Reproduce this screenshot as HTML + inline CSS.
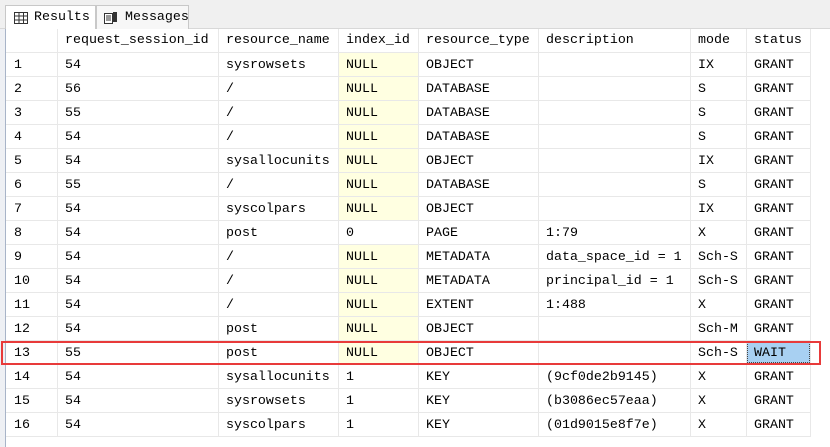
<!DOCTYPE html>
<html><head><style>
*{margin:0;padding:0;box-sizing:border-box}
body{width:830px;height:447px;background:#fff;position:relative;overflow:hidden;font-family:"Liberation Mono","Noto Sans CJK SC",monospace;font-size:13.3px;color:#000}
.tabbar{position:absolute;left:0;top:0;width:830px;height:29px;background:#f0f0f0;border-bottom:1px solid #d8d8d8}
.tab{position:absolute;top:5px;height:24px;border:1px solid #c8c8c8;border-bottom:none;line-height:22px;padding-left:28px;font-size:13.3px}
.leftstrip{position:absolute;left:0;top:29px;width:6px;height:418px;background:#eef0f4;border-right:1px solid #a8b4c8}
.c{position:absolute;height:24px;line-height:24px;white-space:nowrap;padding-left:7px}
.hl{position:absolute;background:#e8e8e8;height:1px}
.vl{position:absolute;background:#e8e8e8;width:1px;top:29px;height:408px}
.y{background:#ffffe1}
</style></head><body>
<div class="tabbar">
 <div class="tab" style="left:5px;width:91px;background:#fff">
  <svg style="position:absolute;left:8px;top:6px" width="14" height="12" viewBox="0 0 14 12"><rect x=".5" y=".5" width="13" height="11" fill="#fff" stroke="#333"/><path d="M.5 4h13M.5 8h13M5 .5v11M9.5 .5v11" stroke="#333"/></svg>Results</div>
 <div class="tab" style="left:96px;width:93px;background:#f7f7f7">
  <svg style="position:absolute;left:6px;top:5px" width="16" height="14" viewBox="0 0 16 14"><rect x="1.5" y="2.5" width="8" height="10" fill="#fff" stroke="#333"/><path d="M3 5h5M3 7h5M3 9h5" stroke="#333"/><rect x="10" y="1" width="4" height="10" fill="#333"/></svg>Messages</div>
</div>
<div class="leftstrip"></div>
<div style="position:absolute;left:747px;top:342px;width:63px;height:21px;background:#a8d0f2;border:1px dotted #444"></div>
<div id="g"></div>
<div style="position:absolute;left:1px;top:341px;width:820px;height:24px;border:2px solid #e83a3a"></div>
<script>
var xs=[6,57,218,338,418,538,690,746,810];
var h=["","request_session_id","resource_name","index_id","resource_type","description","mode","status"];
var d=[
["54","sysrowsets","NULL","OBJECT","","IX","GRANT"],
["56","/","NULL","DATABASE","","S","GRANT"],
["55","/","NULL","DATABASE","","S","GRANT"],
["54","/","NULL","DATABASE","","S","GRANT"],
["54","sysallocunits","NULL","OBJECT","","IX","GRANT"],
["55","/","NULL","DATABASE","","S","GRANT"],
["54","syscolpars","NULL","OBJECT","","IX","GRANT"],
["54","post","0","PAGE","1:79","X","GRANT"],
["54","/","NULL","METADATA","data_space_id = 1","Sch-S","GRANT"],
["54","/","NULL","METADATA","principal_id = 1","Sch-S","GRANT"],
["54","/","NULL","EXTENT","1:488","X","GRANT"],
["54","post","NULL","OBJECT","","Sch-M","GRANT"],
["55","post","NULL","OBJECT","","Sch-S","WAIT"],
["54","sysallocunits","1","KEY","(9cf0de2b9145)","X","GRANT"],
["54","sysrowsets","1","KEY","(b3086ec57eaa)","X","GRANT"],
["54","syscolpars","1","KEY","(01d9015e8f7e)","X","GRANT"]];
var s="";
function cell(i,ty,t,cls){s+='<div class="c '+(cls||'')+'" style="left:'+(xs[i]+1)+'px;top:'+ty+'px;width:'+(xs[i+1]-xs[i]-1)+'px">'+t+'</div>';}
for(var i=0;i<8;i++)cell(i,28,h[i]);
for(var r=0;r<16;r++){var ty=52+24*r+1;cell(0,ty,r+1);for(var j=0;j<7;j++)cell(j+1,ty,d[r][j],(j==2&&d[r][j]=="NULL")?"y":"");}
for(var r=0;r<=16;r++)s+='<div class="hl" style="left:6px;width:805px;top:'+(52+24*r)+'px"></div>';
for(var i=1;i<9;i++)s+='<div class="vl" style="left:'+xs[i]+'px"></div>';
document.getElementById("g").innerHTML=s;
</script>
</body></html>
